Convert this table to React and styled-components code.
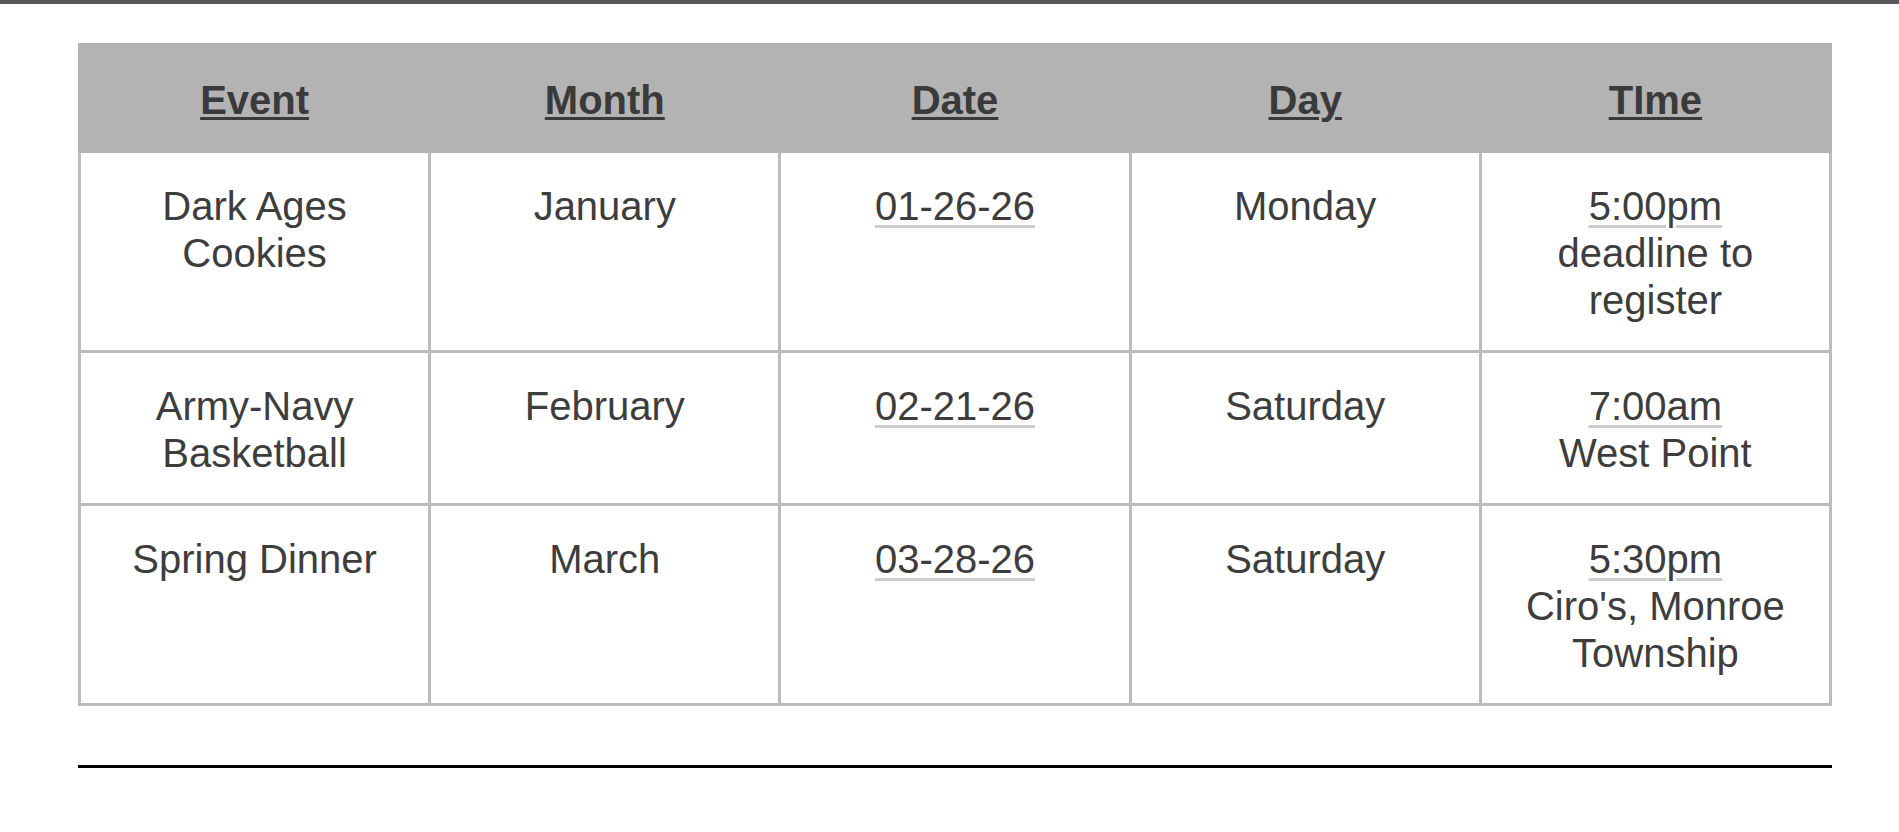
import React from "react";
import styled, { createGlobalStyle } from "styled-components";

const Global = createGlobalStyle`
  html, body { margin: 0; padding: 0; background: #ffffff; }
  body { font-family: "Liberation Sans", Arial, sans-serif; color: #3c3c3c; }
`;

const TopBar = styled.div`
  height: 4px;
  background: #58585b;
`;

const Main = styled.main`
  width: 1754px;
  margin: 39px 0 0 78px;
`;

const Grid = styled.div`
  display: grid;
  grid-template-columns: repeat(5, 1fr);
  gap: 3px;
  padding: 3px;
  background: #bcbcbc;
`;

const HeadCell = styled.div`
  background: #b3b3b3;
  height: 104px;
  display: flex;
  align-items: center;
  justify-content: center;
  margin: -3px -3px -3px ${(p) => (p.$first ? "-3px" : "0")};
  padding: 5px 3px 1px ${(p) => (p.$first ? "3px" : "0")};
  font-weight: 700;
  font-size: 40px;
  line-height: 47px;
  color: #3a3a3a;
  text-decoration: underline;
  text-decoration-thickness: 3px;
  text-underline-offset: 3px;
`;

const Cell = styled.div`
  background: #ffffff;
  padding: 30px 16px 26px;
  text-align: center;
  font-size: 40px;
  line-height: 47px;
  color: #3d3d3d;
`;

const LinkText = styled.a`
  color: inherit;
  text-decoration: underline;
  text-decoration-color: #cccccc;
  text-decoration-thickness: 3px;
  text-underline-offset: 5px;
`;

const Rule = styled.hr`
  margin: 59px 0 0;
  border: 0;
  height: 3px;
  background: #000000;
`;

const headers = ["Event", "Month", "Date", "Day", "TIme"];

const rows = [
  {
    event: ["Dark Ages", "Cookies"],
    month: "January",
    date: "01-26-26",
    day: "Monday",
    time: "5:00pm",
    note: ["deadline to", "register"],
  },
  {
    event: ["Army-Navy", "Basketball"],
    month: "February",
    date: "02-21-26",
    day: "Saturday",
    time: "7:00am",
    note: ["West Point"],
  },
  {
    event: ["Spring Dinner"],
    month: "March",
    date: "03-28-26",
    day: "Saturday",
    time: "5:30pm",
    note: ["Ciro's, Monroe", "Township"],
  },
];

const Lines = ({ items }) =>
  items.map((t, i) => (
    <React.Fragment key={i}>
      {i > 0 && <br />}
      {t}
    </React.Fragment>
  ));

export default function App() {
  return (
    <>
      <Global />
      <TopBar />
      <Main>
        <Grid>
          {headers.map((h, i) => (
            <HeadCell key={h} $first={i === 0}>
              {h}
            </HeadCell>
          ))}
          {rows.map((r, i) => (
            <React.Fragment key={i}>
              <Cell>
                <Lines items={r.event} />
              </Cell>
              <Cell>{r.month}</Cell>
              <Cell>
                <LinkText>{r.date}</LinkText>
              </Cell>
              <Cell>{r.day}</Cell>
              <Cell>
                <LinkText>{r.time}</LinkText>
                <br />
                <Lines items={r.note} />
              </Cell>
            </React.Fragment>
          ))}
        </Grid>
        <Rule />
      </Main>
    </>
  );
}
